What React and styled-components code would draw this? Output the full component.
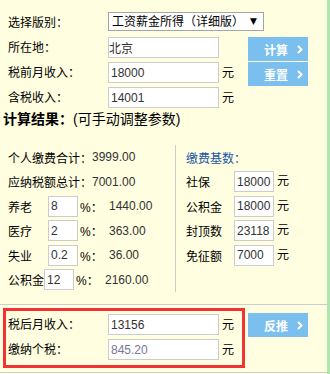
import React from 'react';
import styled, { createGlobalStyle } from 'styled-components';

const GlobalStyle = createGlobalStyle`
  body {
    margin: 0;
    background: #fffee0;
  }
`;

const Page = styled.div`
  width: 327px;
  height: 374px;
  overflow: hidden;
  background: #fffee0;
  border-right: 3px solid #aee6ae;
  font: 12px "Liberation Sans", "Noto Sans CJK SC", sans-serif;
  color: #000;
`;

const TopForm = styled.div`
  display: grid;
  grid-template-columns: 100px 111px 29px 60px;
  grid-auto-rows: 25px;
  padding: 12px 0 0 8px;
`;

const Label = styled.span`
  line-height: 23px;
  white-space: nowrap;
`;

const SelectWrap = styled.div`
  position: relative;
  grid-column: 2 / span 3;
  justify-self: start;
  width: 156px;
  height: 19px;
`;

const Select = styled.select`
  appearance: none;
  width: 100%;
  height: 100%;
  box-sizing: border-box;
  border: 1px solid #a5a5a5;
  border-radius: 0;
  background: #fff;
  padding: 0 0 0 3px;
  font: inherit;
  color: #000;
  outline: none;
`;

const Arrow = styled.span`
  position: absolute;
  right: 7px;
  top: 0;
  font: 9px "DejaVu Sans", sans-serif;
  line-height: 19px;
  pointer-events: none;
`;

const Input = styled.input`
  width: ${p => p.$w || 111}px;
  height: 21px;
  box-sizing: border-box;
  border: 1px solid #cccccc;
  border-radius: 0;
  background: #fff;
  padding: 0 ${p => (p.$flush ? 0 : 2)}px;
  font: inherit;
  color: ${p => (p.$muted ? '#77779a' : '#333')};
  outline: none;
`;

const Unit = styled.span`
  padding-left: 3px;
  line-height: 23px;
`;

const Button = styled.button`
  grid-column: 4;
  width: 60px;
  height: 24px;
  border: 0;
  padding: 0 0 0 16px;
  margin: ${p => p.$m || '0'};
  display: flex;
  align-items: center;
  gap: 9px;
  background: #7bbfef;
  color: #fff;
  font: bold 12px "Liberation Sans", "Noto Sans CJK SC", sans-serif;
  cursor: pointer;
`;

const Chevron = () => (
  <svg width="6" height="9" viewBox="0 0 6 9">
    <polyline points="1,1 4.5,4.5 1,8" fill="none" stroke="#fff" strokeWidth="2" />
  </svg>
);

const Title = styled.div`
  height: 33px;
  padding-left: 3px;
  font-size: 14px;
  line-height: 14px;
  font-weight: normal;
`;

const TitleStrong = styled.span`
  font-weight: bold;
`;

const Results = styled.div`
  display: flex;
  height: 147px;
`;

const LeftCol = styled.div`
  width: 175px;
  padding-left: 8px;
  box-sizing: border-box;
  display: grid;
  grid-auto-rows: 24.5px;
`;

const RightCol = styled.div`
  border-left: 1px solid #cccccc;
  padding-left: 10px;
  display: grid;
  grid-auto-rows: 24.5px;
  align-content: start;
`;

const Row = styled.div`
  display: flex;
  align-items: center;
  white-space: nowrap;
`;

const RowLabel = styled.span`
  width: ${p => p.$w}px;
  flex: none;
`;

const Pct = styled.span`
  width: 29px;
  padding-left: 2px;
  flex: none;
`;

const Value = styled.span`
  color: #333;
`;

const Heading = styled.span`
  color: #1a56a6;
`;

const Line = styled.div`
  height: 1px;
  background: #cccccc;
  margin-top: ${p => p.$top}px;
`;

const Bottom = styled.div`
  display: flex;
  align-items: flex-start;
  padding-top: 3px;
`;

const RedBox = styled.div`
  margin-left: 3px;
  width: 242px;
  box-sizing: border-box;
  border: 3px solid #f33333;
  padding: 3px 0 1px 2px;
  display: grid;
  grid-template-columns: 100px 111px 23px;
  grid-auto-rows: 25px;
`;

const rates = [
  { name: '养老', rate: '8', amount: '1440.00', w: 40 },
  { name: '医疗', rate: '2', amount: '363.00', w: 40 },
  { name: '失业', rate: '0.2', amount: '36.00', w: 40 },
  { name: '公积金', rate: '12', amount: '2160.00', w: 36 },
];

const bases = [
  { name: '社保', value: '18000' },
  { name: '公积金', value: '18000' },
  { name: '封顶数', value: '23118' },
  { name: '免征额', value: '7000' },
];

export default function App() {
  return (
    <>
      <GlobalStyle />
      <Page>
        <TopForm>
          <Label>选择版别：</Label>
          <SelectWrap>
            <Select defaultValue="1">
              <option value="1">工资薪金所得（详细版）</option>
            </Select>
            <Arrow>▼</Arrow>
          </SelectWrap>

          <Label>所在地：</Label>
          <Input defaultValue="北京" $flush />
          <span />
          <Button>计算<Chevron /></Button>

          <Label>税前月收入：</Label>
          <Input defaultValue="18000" />
          <Unit>元</Unit>
          <Button>重置<Chevron /></Button>

          <Label>含税收入：</Label>
          <Input defaultValue="14001" />
          <Unit>元</Unit>
        </TopForm>

        <Title><TitleStrong>计算结果：</TitleStrong>(可手动调整参数)</Title>

        <Results>
          <LeftCol>
            <Row>个人缴费合计：<Value>3999.00</Value></Row>
            <Row>应纳税额总计：<Value>7001.00</Value></Row>
            {rates.map(r => (
              <Row key={r.name}>
                <RowLabel $w={r.w}>{r.name}</RowLabel>
                <Input $w={30} defaultValue={r.rate} />
                <Pct>%：</Pct>
                <Value>{r.amount}</Value>
              </Row>
            ))}
          </LeftCol>
          <RightCol>
            <Row><Heading>缴费基数：</Heading></Row>
            {bases.map(b => (
              <Row key={b.name}>
                <RowLabel $w={48}>{b.name}</RowLabel>
                <Input $w={40} defaultValue={b.value} />
                <Unit>元</Unit>
              </Row>
            ))}
          </RightCol>
        </Results>

        <Line $top={12} />

        <Bottom>
          <RedBox>
            <Label>税后月收入：</Label>
            <Input defaultValue="13156" />
            <Unit>元</Unit>
            <Label>缴纳个税：</Label>
            <Input defaultValue="845.20" $muted readOnly />
            <Unit>元</Unit>
          </RedBox>
          <Button $m="5px 0 0 3px">反推<Chevron /></Button>
        </Bottom>

        <Line $top={4} />
      </Page>
    </>
  );
}
